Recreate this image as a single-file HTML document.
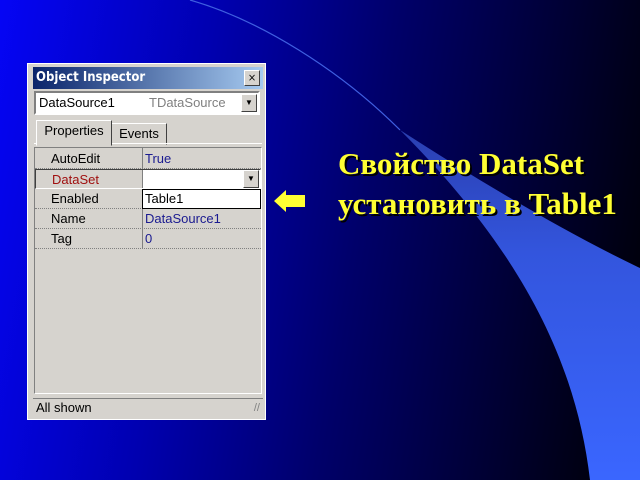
<!DOCTYPE html>
<html><head><meta charset="utf-8"><style>
body{margin:0;width:640px;height:480px;overflow:hidden;position:relative;background:linear-gradient(100deg,#0505f5 0%,#0000b0 30%,#00006a 55%,#000030 80%,#000 100%);font-family:"Liberation Sans",sans-serif}
.a{position:absolute}
.win{left:27px;top:63px;width:239px;height:357px;background:#d6d3ce;border:1px solid #fff;box-sizing:border-box}
.title{left:5px;top:3px;width:230px;height:22px;background:linear-gradient(to right,#0a246a,#a6caf0);color:#fff;font-weight:bold;font-size:13px;line-height:22px;padding-left:3px;box-sizing:border-box;font-family:"DejaVu Sans Condensed","DejaVu Sans",sans-serif}
.x{right:3px;top:3px;width:14px;height:14px;background:#d6d3ce;border:1px solid;border-color:#fff #404040 #404040 #fff;color:#000;font-size:11px;line-height:13px;text-align:center;font-weight:normal}
.combo{left:6px;top:27px;width:226px;height:24px;background:#fff;border:2px solid;border-color:#808080 #fff #fff #808080;box-sizing:border-box;font-size:13px;line-height:20px}
.btn{width:16px;height:18px;background:#d6d3ce;border:1px solid;border-color:#fff #404040 #404040 #fff;box-sizing:border-box;font-size:8px;text-align:center;line-height:16px}
.tab{font-size:13px;border:1px solid;border-color:#fff #404040 transparent #fff;background:#d6d3ce;text-align:center}
.grid{left:6px;top:83px;width:228px;height:247px;border:1px solid;border-color:#808080 #fff #fff #808080;box-sizing:border-box}
.row{left:0;width:226px;height:20px;border-bottom:1px dotted #808080;box-sizing:border-box;font-size:13px;line-height:19px}
.k{position:absolute;left:16px}
.v{position:absolute;left:110px;color:#1a1a90}
.status{left:5px;top:334px;width:230px;height:18px;border-top:1px solid #808080;font-size:13px;line-height:18px;padding-left:3px;box-sizing:border-box}
.txt{left:338px;top:144px;color:#ffff33;font-family:"Liberation Serif",serif;font-weight:bold;font-size:31px;line-height:40px;text-shadow:2px 2px 0 #000;white-space:nowrap}
</style></head><body>
<svg class="a" style="left:0;top:0" width="640" height="480">
<defs><linearGradient id="g" x1="0" y1="0" x2="0" y2="1"><stop offset="0" stop-color="#2a3fb0"/><stop offset="0.35" stop-color="#3355dd"/><stop offset="1" stop-color="#3a66ff"/></linearGradient></defs>
<path d="M400 130 C470 175 560 230 640 268 L640 480 L590 480 C575 350 510 240 400 130Z" fill="url(#g)"/>
<path d="M190 0 C260 20 340 70 400 130" stroke="#3f5fe0" stroke-width="1.2" fill="none"/>
<path d="M274 201 L286 190 L286 195 L305 195 L305 207 L286 207 L286 212Z" fill="#ffff33"/>
</svg>
<div class="a win">
 <div class="a title">Object Inspector<div class="a x">×</div></div>
 <div class="a combo"><span class="a" style="left:3px">DataSource1</span><span class="a" style="left:113px;color:#808080">TDataSource</span><div class="a btn" style="right:1px;top:1px">▼</div></div>
 <div class="a tab" style="left:8px;top:56px;width:74px;height:24px;line-height:20px;z-index:2">Properties</div>
 <div class="a tab" style="left:83px;top:59px;width:54px;height:20px;line-height:20px">Events</div>
 <div class="a" style="left:6px;top:79px;width:228px;height:1px;background:#fff"></div>
 <div class="a grid">
  <div class="a" style="left:107px;top:0;width:1px;height:100px;background:#808080"></div>
  <div class="a row" style="top:1px"><span class="k">AutoEdit</span><span class="v">True</span></div>
  <div class="a row" style="top:21px;border:1px solid;border-color:#404040 #fff #fff #404040"><span class="k" style="color:#a01010">DataSet</span><div class="a" style="left:107px;top:0;width:117px;height:18px;background:#fff"></div><div class="a btn" style="right:1px;top:0">▼</div></div>
  <div class="a row" style="top:41px"><span class="k">Enabled</span></div>
  <div class="a row" style="top:61px"><span class="k">Name</span><span class="v">DataSource1</span></div>
  <div class="a row" style="top:81px"><span class="k">Tag</span><span class="v">0</span></div>
  <div class="a" style="left:107px;top:41px;width:119px;height:20px;background:#fff;border:1px solid #000;box-sizing:border-box;font-size:13px;line-height:18px;padding-left:2px">Table1</div>
 </div>
 <div class="a status">All shown<span class="a" style="right:3px;color:#808080;font-size:11px">//</span></div>
</div>
<div class="a txt">Свойство DataSet<br>установить в Table1</div>
</body></html>
